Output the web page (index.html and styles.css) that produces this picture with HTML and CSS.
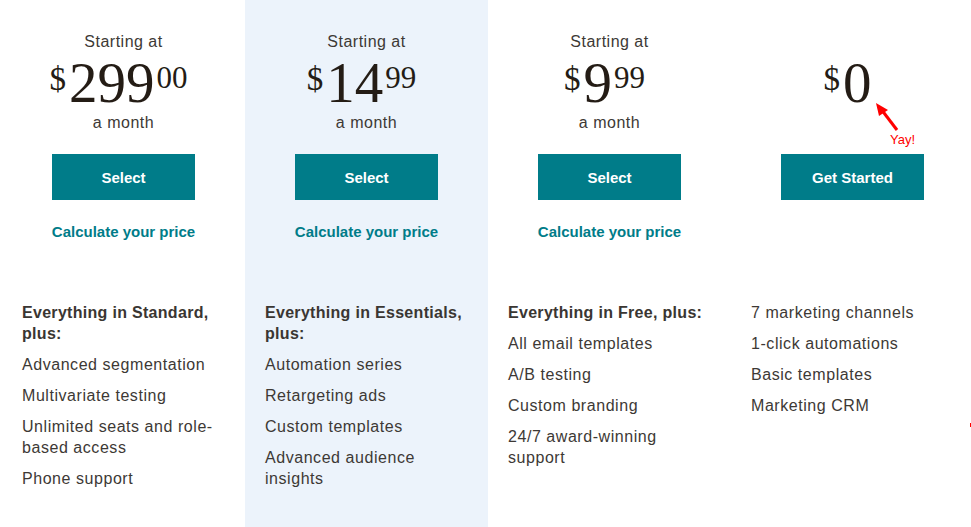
FILE: index.html
```html
<!DOCTYPE html>
<html lang="en">
<head>
<meta charset="utf-8">
<title>Pricing</title>
<link rel="stylesheet" href="styles.css">
</head>
<body>
<div class="plans">
  <section class="plan">
    <div class="head">
      <p class="starting">Starting at</p>
      <p class="price"><span class="cur">$</span><span class="main">299</span><span class="cents">00</span></p>
      <p class="month">a month</p>
      <a class="btn" href="#">Select</a>
      <a class="calc" href="#">Calculate your price</a>
    </div>
    <ul class="features">
      <li class="lead">Everything in Standard, plus:</li>
      <li>Advanced segmentation</li>
      <li>Multivariate testing</li>
      <li>Unlimited seats and role-based access</li>
      <li>Phone support</li>
    </ul>
  </section>
  <section class="plan plan-featured">
    <div class="head">
      <p class="starting">Starting at</p>
      <p class="price"><span class="cur">$</span><span class="main">14</span><span class="cents">99</span></p>
      <p class="month">a month</p>
      <a class="btn" href="#">Select</a>
      <a class="calc" href="#">Calculate your price</a>
    </div>
    <ul class="features">
      <li class="lead">Everything in Essentials, plus:</li>
      <li>Automation series</li>
      <li>Retargeting ads</li>
      <li>Custom templates</li>
      <li>Advanced audience insights</li>
    </ul>
  </section>
  <section class="plan">
    <div class="head">
      <p class="starting">Starting at</p>
      <p class="price"><span class="cur">$</span><span class="main">9</span><span class="cents">99</span></p>
      <p class="month">a month</p>
      <a class="btn" href="#">Select</a>
      <a class="calc" href="#">Calculate your price</a>
    </div>
    <ul class="features">
      <li class="lead">Everything in Free, plus:</li>
      <li>All email templates</li>
      <li>A/B testing</li>
      <li>Custom branding</li>
      <li>24/7 award-winning support</li>
    </ul>
  </section>
  <section class="plan plan-free">
    <div class="head">
      <p class="starting">&nbsp;</p>
      <p class="price"><span class="cur">$</span><span class="main">0</span></p>
      <p class="month">&nbsp;</p>
      <a class="btn" href="#">Get Started</a>
      <p class="calc">&nbsp;</p>
    </div>
    <ul class="features">
      <li>7 marketing channels</li>
      <li>1-click automations</li>
      <li>Basic templates</li>
      <li>Marketing CRM</li>
    </ul>
    <div class="yay">
      <svg class="arrow" width="30" height="30" viewBox="0 0 30 30"><path d="M24 27 L8 6" stroke="#f00" stroke-width="3" fill="none"/><path d="M3 0 L15 7 L6 13 Z" fill="#f00"/></svg>
      <span class="yay-text">Yay!</span>
    </div>
  </section>
</div>
<span class="tick"></span>
</body>
</html>
```

FILE: styles.css
```css
html, body {
  margin: 0;
  padding: 0;
  background: #fff;
  overflow: hidden;
}
body {
  font-family: "Liberation Sans", Arial, sans-serif;
  color: #3d3935;
  position: relative;
  height: 527px;
}
.plans {
  display: flex;
  margin-left: 2px;
  width: 980px;
}
.plan {
  position: relative;
  width: 243px;
  flex: 0 0 243px;
  box-sizing: border-box;
  padding: 0 20px;
  height: 527px;
}
.plan-featured {
  background: #ecf3fb;
}
.head {
  display: flex;
  flex-direction: column;
  align-items: center;
  padding-top: 32px;
}
.head p { margin: 0; }
.starting, .month {
  font-size: 16px;
  line-height: 20px;
  letter-spacing: 0.5px;
}
.price {
  display: flex;
  align-items: flex-start;
  justify-content: center;
  height: 60px;
  padding-right: 10px;
  margin-top: 1px !important;
  font-family: "Liberation Serif", "Times New Roman", serif;
  color: #241c15;
}
.cur {
  font-size: 33px;
  line-height: 33px;
  margin-top: 10px;
  margin-right: 3px;
}
.main {
  font-size: 57px;
  line-height: 60px;
}
.cents {
  font-size: 31px;
  line-height: 31px;
  margin-top: 9px;
  margin-left: 2px;
}
.btn {
  display: flex;
  align-items: center;
  justify-content: center;
  width: 143px;
  height: 46px;
  margin-top: 21px;
  background: #007c89;
  color: #fff;
  font-weight: bold;
  font-size: 15px;
  text-decoration: none;
}
.calc {
  margin-top: 22px !important;
  font-size: 15px;
  line-height: 20px;
  color: #007c89;
  font-weight: bold;
  text-decoration: none;
}
.features {
  list-style: none;
  margin: 60px 0 0;
  padding: 0;
}
.features li {
  font-size: 16px;
  line-height: 21px;
  margin-bottom: 10px;
  letter-spacing: 0.55px;
}
.features .lead {
  font-weight: bold;
  letter-spacing: 0.3px;
  color: #3a3632;
}
.yay {
  position: absolute;
  left: 138px;
  top: 103px;
  width: 60px;
  height: 46px;
}
.arrow {
  position: absolute;
  left: 4px;
  top: 0;
}
.yay-text {
  position: absolute;
  left: 21px;
  top: 29px;
  font-size: 13px;
  color: #f00;
}
.tick {
  position: absolute;
  left: 970px;
  top: 423px;
  width: 1px;
  height: 4px;
  background: #f00;
}
```
